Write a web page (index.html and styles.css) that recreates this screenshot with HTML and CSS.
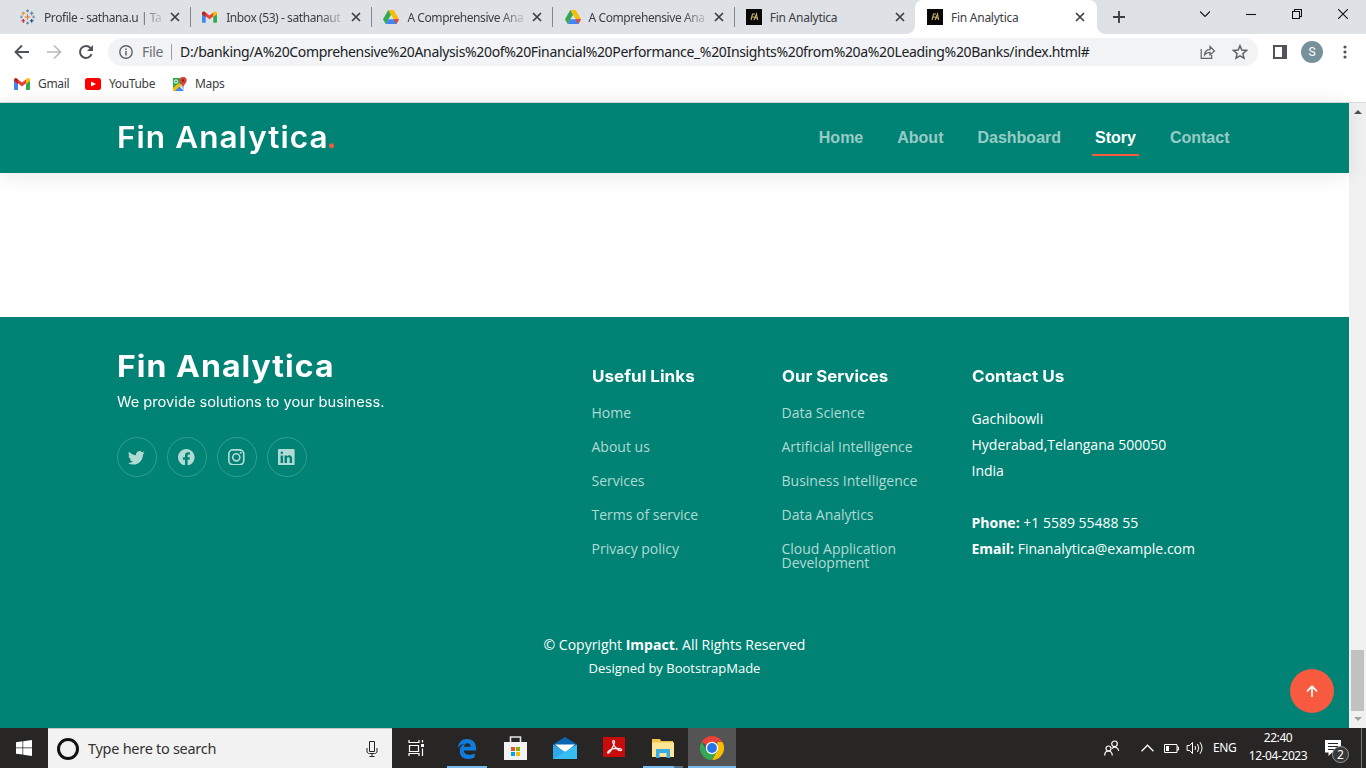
FILE: index.html
```html
<!DOCTYPE html>
<html lang="en">
<head>
<meta charset="utf-8">
<title>Fin Analytica</title>
<link rel="stylesheet" href="styles.css">
</head>
<body>
<svg class="defs" width="0" height="0">
  <symbol id="gmail" viewBox="0 0 16 12"><path fill="#4285f4" d="M0 2v9q0 1 1 1h3V5z"/><path fill="#34a853" d="M16 2v9q0 1-1 1h-3V5z"/><path fill="#ea4335" d="M3.500 5V1L8 4.400 12.500 1v4L8 8.500z"/><path fill="#c5221f" d="M0 3V2C0 .2 2-.6 3.600.9L4 1.200V6z"/><path fill="#fbbc04" d="M16 3V2c0-1.800-2-2.600-3.600-1.100L12 1.200V6z"/></symbol>
  <symbol id="drive" viewBox="0 0 16 14"><path fill="#fbbc04" d="M5.300 0h5.400L16 9.300h-5.300z"/><path fill="#4285f4" d="M5.300 9.300H16L13.300 14H2.700z"/><path fill="#34a853" d="M0 9.300 5.300 0 8 4.700 2.700 14z"/><path fill="#ea4335" d="M10.700 9.300H16L13.300 14z"/></symbol>
  <symbol id="x" viewBox="0 0 10 10"><path d="M1 1l8 8M9 1L1 9" stroke="#3c4043" stroke-width="1.700"/></symbol>
  <symbol id="fa" viewBox="0 0 16 16"><path fill="#080808" d="M0 0h16v16H0z"/><path d="M5 11l1.500-6H9M5.500 8h3M8 11l2.500-6 1 6M9 9h3" fill="none" stroke="#c9b16b" stroke-width="1.100"/></symbol>
</svg>

<header class="browser">
  <div class="tabs">
    <div class="tab first"><svg class="fav" viewBox="0 0 16 16"><g stroke-width="1.200"><path stroke="#e8762d" d="M8 5v6M5 8h6"/><path stroke="#5b879b" d="M8 0v3M6.500 1.500h3M8 13v3M6.500 14.500h3"/><path stroke="#eb912c" d="M3.500 2v4M1.500 4h4"/><path stroke="#59879b" d="M12.500 2v4M10.500 4h4"/><path stroke="#c72035" d="M3.500 10v4M1.500 12h4"/><path stroke="#1f457e" d="M12.500 10v4M10.500 12h4"/><path stroke="#7199a6" d="M1.500 6.500v3M0 8h3M14.500 6.500v3M13 8h3"/></g></svg><span class="title long">Profile - sathana.u | Tal</span><svg class="close"><use href="#x"/></svg></div>
    <div class="tab"><svg class="fav gm"><use href="#gmail"/></svg><span class="title long">Inbox (53) - sathanaut</span><svg class="close"><use href="#x"/></svg></div>
    <div class="tab"><svg class="fav"><use href="#drive"/></svg><span class="title long">A Comprehensive Ana</span><svg class="close"><use href="#x"/></svg></div>
    <div class="tab"><svg class="fav"><use href="#drive"/></svg><span class="title long">A Comprehensive Ana</span><svg class="close"><use href="#x"/></svg></div>
    <div class="tab last"><svg class="fav"><use href="#fa"/></svg><span class="title">Fin Analytica</span><svg class="close"><use href="#x"/></svg></div>
    <div class="tab active"><svg class="fav"><use href="#fa"/></svg><span class="title">Fin Analytica</span><svg class="close"><use href="#x"/></svg></div>
    <svg class="plus" viewBox="0 0 12 12"><path d="M6 0v12M0 6h12" stroke="#3c4043" stroke-width="1.900"/></svg>
    <div class="window-controls">
      <svg width="10" height="6"><path d="M0 .5l5 5 5-5"/></svg>
      <svg width="10" height="6"><path d="M0 3.500h10"/></svg>
      <svg width="10" height="10"><path d="M.5 2.500h7v7h-7zM2.500 2.500v-2h7v7h-2"/></svg>
      <svg width="10" height="10"><path d="M0 0l10 10M10 0L0 10"/></svg>
    </div>
  </div>
  <div class="toolbar">
    <svg class="nav" viewBox="0 0 16 16"><path d="M15 8H2M8 1.500L1.500 8 8 14.500" fill="none" stroke="#50545a" stroke-width="1.900"/></svg>
    <svg class="nav" viewBox="0 0 16 16"><path d="M1 8h13M8 1.500L14.500 8 8 14.500" fill="none" stroke="#b8babd" stroke-width="1.700"/></svg>
    <svg class="nav" viewBox="0 0 16 16"><path d="M13.600 10.200A6 6 0 1 1 12.500 4" fill="none" stroke="#50545a" stroke-width="2"/><path fill="#50545a" d="M15 1v6H9z"/></svg>
    <div class="address">
      <svg class="info" viewBox="0 0 14 14"><circle cx="7" cy="7" r="6.200" fill="none" stroke="#5f6368" stroke-width="1.400"/><path d="M7 6v4.500M7 3.500V5" stroke="#5f6368" stroke-width="1.500"/></svg>
      <span class="scheme">File</span><span class="rule"></span>
      <span class="url">D:/banking/A%20Comprehensive%20Analysis%20of%20Financial%20Performance_%20Insights%20from%20a%20Leading%20Banks/index.html#</span>
      <svg class="share" viewBox="0 0 16 14"><path d="M1.200 4v9.300h10.500V10M4.500 10c.3-3.500 2.300-5.300 5.500-5.300V1.500L14.500 6 10 10V7.300C7.500 7.300 6 8 4.500 10z" fill="none" stroke="#5f6368" stroke-width="1.200"/></svg>
      <svg class="star" viewBox="0 0 16 16"><path d="M8 1.700l1.800 4.400 4.700.4-3.600 3.100 1.100 4.600L8 11.800l-4 2.400 1.100-4.600-3.600-3.100 4.700-.4z" fill="none" stroke="#5f6368" stroke-width="1.500"/></svg>
    </div>
    <svg class="panel" viewBox="0 0 14 14"><path d="M1 1h12v12H1z" fill="none" stroke="#50545a" stroke-width="2"/><path d="M9 1h4v12H9z" fill="#50545a"/></svg>
    <span class="avatar">S</span>
    <svg class="kebab" viewBox="0 0 4 14"><g fill="#50545a"><circle cx="2" cy="2" r="1.600"/><circle cx="2" cy="7" r="1.600"/><circle cx="2" cy="12" r="1.600"/></g></svg>
  </div>
  <div class="bookmarks">
    <svg class="bm-gmail"><use href="#gmail"/></svg><span class="b1">Gmail</span>
    <svg class="bm-yt" viewBox="0 0 16 12"><rect width="16" height="12" rx="2.500" fill="#f00"/><path fill="#fff" d="M6 3.500L11 6 6 8.500z"/></svg><span class="b2">YouTube</span>
    <svg class="bm-map" viewBox="0 0 15 15"><path fill="#34a853" d="M1 1h9v6L1 14z"/><path fill="#4285f4" d="M7 9l5 5H2z"/><path fill="#c3c7c9" d="M12 5v8L8 9z"/><path fill="#fbbc04" d="M1 14V11l6-5 2 2-6 6z"/><circle cx="4" cy="4.500" r="1.600" fill="none" stroke="#fff"/><path fill="#db4437" d="M7.500 3.500a3.600 3.600 0 0 1 7.200 0C14.700 6 11.500 8 11.100 10 10.700 8 7.500 6 7.500 3.500z"/><circle cx="11.100" cy="3.500" r="1.200" fill="#8c1f17"/></svg><span class="b3">Maps</span>
  </div>
</header>

<div class="viewport">
  <main class="page">
    <div class="site-header">
      <div class="logo">Fin Analytica<i>.</i></div>
      <nav><a>Home</a><a>About</a><a>Dashboard</a><a class="current">Story</a><a>Contact</a></nav>
    </div>
    <footer class="footer">
      <div class="columns">
        <section class="brand">
          <h2>Fin Analytica</h2>
          <p>We provide solutions to your business.</p>
          <div class="social">
            <a><svg viewBox="0 0 16 16"><path d="M5.026 15c6.038 0 9.341-5.003 9.341-9.334 0-.14 0-.282-.006-.422A6.685 6.685 0 0 0 16 3.542a6.658 6.658 0 0 1-1.889.518 3.301 3.301 0 0 0 1.447-1.817 6.533 6.533 0 0 1-2.087.793A3.286 3.286 0 0 0 7.875 6.030a9.325 9.325 0 0 1-6.767-3.429 3.289 3.289 0 0 0 1.018 4.382A3.323 3.323 0 0 1 .640 6.575v.045a3.288 3.288 0 0 0 2.632 3.218 3.203 3.203 0 0 1-.865.115 3.230 3.230 0 0 1-.614-.057 3.283 3.283 0 0 0 3.067 2.277A6.588 6.588 0 0 1 .780 13.580a6.320 6.320 0 0 1-.780-.045A9.344 9.344 0 0 0 5.026 15z"/></svg></a>
            <a><svg viewBox="0 0 16 16"><path d="M16 8.049c0-4.446-3.582-8.050-8-8.050C3.580 0-.002 3.603-.002 8.050c0 4.017 2.926 7.347 6.750 7.951v-5.625h-2.030V8.050H6.750V6.275c0-2.017 1.195-3.131 3.022-3.131.876 0 1.791.157 1.791.157v1.980h-1.009c-.993 0-1.303.621-1.303 1.258v1.510h2.218l-.354 2.326H9.250V16c3.824-.604 6.750-3.934 6.750-7.951z"/></svg></a>
            <a><svg viewBox="0 0 16 16"><g fill="none" stroke="#b2dad5" stroke-width="1.600"><rect x=".8" y=".8" width="14.400" height="14.400" rx="4"/><circle cx="8" cy="8" r="3.400"/></g><circle cx="12.300" cy="3.700" r="1"/></svg></a>
            <a><svg viewBox="0 0 16 16"><path fill-rule="evenodd" d="M0 1.100C0 .5.500 0 1.200 0h13.600C15.500 0 16 .5 16 1.100v13.800c0 .6-.5 1.100-1.200 1.100H1.200C.5 16 0 15.500 0 14.900zM2.500 6.200h2.400v7.200H2.500zM3.700 2.400a1.250 1.250 0 1 0 0 2.500 1.250 1.250 0 1 0 0-2.500zM6.300 6.200h2.400v1C9.700 5.500 13.600 5.400 13.600 9v4.400h-2.400V9.500c0-2-2.500-2-2.500 0v3.900H6.300z"/></svg></a>
          </div>
        </section>
        <section><h4>Useful Links</h4><ul><li>Home</li><li>About us</li><li>Services</li><li>Terms of service</li><li>Privacy policy</li></ul></section>
        <section><h4 class="services">Our Services</h4><ul><li>Data Science</li><li>Artificial Intelligence</li><li>Business Intelligence</li><li>Data Analytics</li><li>Cloud Application Development</li></ul></section>
        <section><h4>Contact Us</h4><p class="contact">Gachibowli<br>Hyderabad,Telangana 500050<br>India<br><br><b>Phone:</b> +1 5589 55488 55<br><b>Email:</b> Finanalytica@example.com</p></section>
      </div>
      <div class="legal"><p>© Copyright <b>Impact</b>. All Rights Reserved</p><p class="credit">Designed by BootstrapMade</p></div>
    </footer>
    <a class="to-top"><svg viewBox="0 0 12 12"><path d="M6 12V1.500M1 6.300L6 1.300l5 5" fill="none" stroke="#fff" stroke-width="1.700"/></svg></a>
  </main>
  <div class="scrollbar"><svg viewBox="0 0 8 4"><path fill="#505050" d="M0 4l4-4 4 4z"/></svg><span class="thumb"></span><svg viewBox="0 0 8 4"><path fill="#a3a3a3" d="M0 0h8L4 4z"/></svg></div>
</div>

<div class="taskbar">
  <div class="start"><svg viewBox="0 0 16 16"><path fill="#fff" d="M0 2.200l6.500-.9v6.300H0zM7.200 1.200L16 0v7.600H7.200zM0 8.300h6.500v6.300L0 13.800zM7.200 8.300H16V16l-8.800-1.200z"/></svg></div>
  <div class="search"><span class="cortana"></span><span class="hint">Type here to search</span><svg class="mic" viewBox="0 0 12 16"><path d="M3.500.5h5v10h-5zM1 7v3c0 2 1 2.500 2.500 2.500h5C10 12.500 11 12 11 10V7M6 12.500v3M3.500 15.500h5" fill="none" stroke="#222"/></svg></div>
  <div class="app tasks"><svg width="18" height="16" viewBox="0 0 18 16"><path d="M1 0v2.500h10V0M1.500 5.500h9v6h-9zM1 16v-2.500h10V16M14.500 0v16" fill="none" stroke="#fff" stroke-width="1.200"/><path fill="#282625" d="M13 2.500h3v6h-3z"/><path fill="#fff" d="M13 4h3v3h-3z"/></svg></div>
  <div class="app run"><svg width="20" height="21" viewBox="0 0 22 22" preserveAspectRatio="none"><path fill="#0f7bdc" d="M1 10.500C1.500 4.500 5.500 1 11 1c6.500 0 10 4.500 10 9.500V13H7.500c.3 3 2.500 4.600 6 4.600 2.200 0 4.300-.6 6-1.600v4.200C17.700 21.200 15.400 22 12.500 22 6.700 22 3 18.600 3 13.500c0-3.400 2-6.300 5.200-7.500C5 6.200 2.500 8 1 10.500zM7.700 9.200h7.400C15 6.800 13.600 5.500 11.500 5.500S8 7 7.700 9.200z"/></svg></div>
  <div class="app"><svg width="23" height="24" viewBox="0 0 23 24"><path d="M6.500 8V1h10v7" fill="none" stroke="#e5e5e5" stroke-width="1.600"/><path fill="#f3f3f3" d="M0 6h23v18H0z"/><path fill="#f25022" d="M7 11h4v4H7z"/><path fill="#7fba00" d="M12 11h4v4h-4z"/><path fill="#00a4ef" d="M7 16h4v4H7z"/><path fill="#ffb900" d="M12 16h4v4h-4z"/></svg></div>
  <div class="app"><svg width="24" height="22" viewBox="0 0 24 22"><path fill="#0767b4" d="M0 7.500L12 0l12 7.500V15H0z"/><path fill="#fff" d="M2 7.500h20L12 16z"/><path fill="#2fa8e8" d="M0 7.500L24 22H0z"/><path fill="#38bdf2" d="M24 7.500V22H0l12-7.300z"/></svg></div>
  <div class="app"><svg class="pdf" width="22" height="20" viewBox="0 0 22 20"><path fill="#c80b0b" d="M0 0h22v20H0z"/><path d="M10.500 3.500c-2 0 0 5 3 8s5.500 2.500 5 1-7-1.500-10-.2-4.500 3-3.600 3.800c1.600 1.200 6.600-8.600 6.600-11.300 0-.8-.4-1.300-1-1.300z" fill="none" stroke="#fff" stroke-width="1.200"/></svg></div>
  <div class="app run split"><svg width="22" height="19" viewBox="0 0 22 19"><path fill="#f1c54f" d="M0 0h8l1 2h12v4H0z"/><path fill="#ffe697" d="M0 3.500h22V18H0z"/><path fill="#39ace3" d="M4 10h14v9h-3.500v-5h-7v5H4z"/></svg></div>
  <div class="app run selected"><svg width="24" height="24" viewBox="0 0 24 24"><path fill="#ea4335" d="M1.600 6A12 12 0 0 1 22.400 6H12v6z"/><path fill="#fbbc04" d="M22.400 6A12 12 0 0 1 12 24l5.200-9L17.200 6z"/><path fill="#34a853" d="M1.600 6A12 12 0 0 0 12 24l5.200-9-5.200 3-5.200-3z"/><circle cx="12" cy="12" r="6.200" fill="#fff"/><circle cx="12" cy="12" r="4.900" fill="#2873e6"/></svg></div>
  <div class="tray">
    <svg class="people" viewBox="0 0 16 16"><g fill="none" stroke="#fff" stroke-width="1.200"><circle cx="10.500" cy="3.800" r="2.800"/><circle cx="4.500" cy="8.500" r="2.500"/><path d="M.7 15.500c0-6 7.600-6 7.600 0M8 8.500c3-2.500 6.300-1 6.600 2.500"/></g></svg>
    <svg class="chev" viewBox="0 0 12 7"><path d="M.5 6.500L6 1l5.500 5.500" fill="none" stroke="#fff" stroke-width="1.200"/></svg>
    <svg class="bat" viewBox="0 0 15 9"><path d="M.5.5h12.500v8H.5zM13 3h1.500v3H13" fill="none" stroke="#fff"/><path fill="#fff" d="M2 2h3v5H2z"/></svg>
    <svg class="vol" viewBox="0 0 17 14"><path d="M.6 4.500h2.500L6 1.500v11l-2.900-3H.6zM8.500 5q1.200 2 0 4M11 3q2.500 4 0 8M13.500 1.200q4 5.800 0 11.600" fill="none" stroke="#fff"/></svg>
    <span class="lang">ENG</span>
    <div class="clock"><span>22:40</span><span>12-04-2023</span></div>
    <div class="notice"><svg viewBox="0 0 16 16"><path fill="#fff" d="M0 0h16v12.500H7L3.500 16v-3.500H0z"/><path d="M3 3.500h10M3 6.500h10M3 9.500h7" stroke="#252525"/></svg><span class="badge">2</span></div>
    <span class="peek"></span>
  </div>
</div>
</body>
</html>
```
FILE: styles.css
```css
* { box-sizing: border-box; }
body { margin: 0; width: 1366px; height: 768px; overflow: hidden; display: flex; flex-direction: column; font-family: "Open Sans", sans-serif; }
svg { display: block; flex: none; }
p, h2, h4, ul { margin: 0; padding: 0; }
.defs { position: absolute; }

/* Browser frame */
.browser { height: 103px; border-bottom: 1px solid #dadce0; color: #3c4043; font-family: "Noto Sans", sans-serif; white-space: nowrap; }
.tabs { height: 34px; background: #dee1e6; display: flex; padding-left: 10px; }
.tab { flex: none; width: 181.2px; height: 34px; display: flex; align-items: center; padding-left: 11px; font-size: 12px; background: linear-gradient(#85888d, #85888d) 180px 7px / 1px 20px no-repeat; }
.tab.first { padding-left: 10px; }
.tab.first .title { width: 119px; }
.tab.first .fav { width: 15px; margin-right: 1px; }
.tab.last { background: none; }
.tab.active { position: relative; background: #fff; border-radius: 8px 8px 0 0; width: 182px; margin-left: -1px; padding-left: 12px; }
.tab.active::before, .tab.active::after { content: ""; position: absolute; bottom: 0; width: 8px; height: 8px; }
.tab.active::before { left: -8px; background: radial-gradient(circle at 0 0, transparent 7.5px, #fff 8px); }
.tab.active::after { right: -8px; background: radial-gradient(circle at 100% 0, transparent 7.5px, #fff 8px); }
.tab.active .title { width: 117px; }
.fav { width: 16px; height: 16px; }
.fav.gm { height: 12px; width: 15px; margin-right: 1px; }
.title { flex: none; width: 118px; margin-left: 7px; padding-left: 1px; letter-spacing: -.25px; }
.title.long { letter-spacing: -.42px; -webkit-mask-image: linear-gradient(90deg, #000 80%, rgba(0, 0, 0, .15)); mask-image: linear-gradient(90deg, #000 80%, rgba(0, 0, 0, .15)); }
.close { width: 10px; height: 10px; margin-left: 8px; }
.plus { width: 12px; height: 12px; margin: 11px 0 0 16px; }
.window-controls { display: flex; align-items: center; gap: 36px; height: 28px; margin-left: auto; padding-right: 18px; }
.window-controls path { fill: none; stroke: #111; stroke-width: 1.1; }
.toolbar { height: 36px; display: flex; align-items: center; padding-left: 14px; }
.nav { width: 16px; height: 16px; margin-right: 16px; }
.address { width: 1150px; height: 28px; border-radius: 14px; margin-left: -2px; padding: 0 11px; background: #f1f3f4; display: flex; align-items: center; }
.info { width: 14px; height: 14px; }
.scheme { width: 28px; margin-left: 9px; padding-bottom: 1px; font-size: 14px; color: #6b6f74; letter-spacing: -.3px; }
.rule { width: 1px; height: 16px; background: #9a9da1; margin-left: 1px; }
.url { margin-left: 8px; width: 960px; padding-bottom: 2px; font-size: 14px; color: #202124; letter-spacing: -.34px; }
.share { width: 16px; height: 14px; margin-left: auto; }
.star { width: 16px; height: 16px; margin-left: 16px; margin-right: -1px; }
.panel { width: 14px; height: 14px; margin-left: 15px; }
.avatar { width: 22px; height: 22px; border-radius: 50%; margin-left: 14px; background: #78909c; color: #fff; text-align: center; font: 12px/22px Roboto, sans-serif; }
.kebab { width: 4px; height: 14px; margin-left: 19.500px; }
.bookmarks { height: 28px; display: flex; align-items: center; padding-left: 14px; font-size: 12px; letter-spacing: -.35px; }
.bookmarks span { padding-bottom: 1px; }
.bm-gmail { width: 16px; height: 12px; margin-right: 8px; }
.bm-yt { width: 16px; height: 12px; margin-right: 8px; }
.bm-map { width: 15px; height: 15px; margin-right: 8px; }
.b1 { width: 47px; }
.b2 { width: 63px; }

/* Site */
.viewport { height: 625px; display: flex; }
.page { position: relative; width: 1349px; display: flex; flex-direction: column; justify-content: space-between; background: #fff; color: #fff; }
.site-header { height: 70px; padding: 0 119px 0 117px; background: #008374; display: flex; align-items: center; justify-content: space-between; box-shadow: 0 2px 20px rgba(0, 0, 0, .1); }
.logo { font: 600 30px/36px Inter, sans-serif; letter-spacing: 1px; padding-bottom: 2px; transform: scaleX(1.05); transform-origin: 0 0; }
.logo i { color: #f85a40; font-style: normal; margin-left: -2px; }
nav { display: flex; gap: 34px; padding-right: .5px; }
nav a { font: bold 16px/38px "Liberation Sans", Arial, sans-serif; color: rgba(255, 255, 255, .6); }
nav .current { color: #fff; padding: 0 3px; margin: 0 -3px; border-bottom: 2px solid #f85a40; height: 37px; }
.footer { height: 411px; background: #008374; font-size: 14px; }
.columns { height: 311px; padding: 0 116px 0 117px; display: grid; grid-template-columns: 474.5px 190px 190px 1fr; }
.brand { padding-top: 31px; }
.brand h2 { font: 700 30px/36px Inter, sans-serif; letter-spacing: 1px; width: max-content; transform: scaleX(1.064); transform-origin: 0 0; }
.brand p { font: 14px/20px Inter, sans-serif; padding-top: 8px; width: max-content; transform: scaleX(1.047); transform-origin: 0 0; }
.social { display: flex; gap: 10px; margin-top: 25px; }
.social a { width: 40px; height: 40px; border: 1px solid rgba(255, 255, 255, .2); border-radius: 50%; display: flex; align-items: center; justify-content: center; }
.social svg { width: 16.600px; height: 16.600px; margin-right: 1px; fill: #b2dad5; }
.columns h4 { font: 700 16px/20px Inter, sans-serif; padding-top: 49px; height: 79px; width: max-content; transform: scaleX(1.067); transform-origin: 0 0; }
.columns .services { transform: scaleX(1.05); }
.columns ul { list-style: none; width: 166px; }
.columns li { line-height: 14px; padding: 10px 0; color: #b2dad5; }
.contact { line-height: 26px; padding-top: 10px; white-space: nowrap; }
.legal { text-align: center; line-height: 24px; padding-top: 5px; }
.credit { font-size: 13px; line-height: 22px; }
.to-top { position: absolute; right: 15px; bottom: 15px; width: 44px; height: 44px; border-radius: 50%; background: #f85a40; display: flex; align-items: center; justify-content: center; }
.to-top svg { width: 12px; height: 12px; }
.scrollbar { width: 17px; background: #f1f1f1; display: flex; flex-direction: column; align-items: center; padding: 7px 0 7px; }
.scrollbar svg { width: 8px; height: 4px; }
.thumb { width: 13px; height: 61px; background: #c1c1c1; margin: auto 0 6px; }

/* Taskbar */
.taskbar { height: 40px; background: #282625; color: #fff; display: flex; white-space: nowrap; font-family: "Noto Sans", sans-serif; }
.start { width: 48px; padding: 12px 16px; }
.start svg { width: 16px; height: 16px; }
.search { width: 344px; background: #f2f2f2; color: #333; border-top: 1px solid #c6c6c6; display: flex; align-items: center; padding: 0 14px 0 9px; }
.cortana { width: 22px; height: 22px; border: 3px solid #111; border-radius: 50%; }
.hint { font-size: 14.5px; margin-left: 9px; padding-bottom: 2px; letter-spacing: -.28px; }
.mic { width: 12px; height: 16px; margin-left: auto; }
.app { width: 49.200px; height: 40px; display: flex; align-items: center; justify-content: center; }
.app.tasks { width: 50px; padding-right: 1px; }
.app.run { background: linear-gradient(#76b9ed, #76b9ed) 50% 100% / 40px 2px no-repeat; }
.app.selected { width: 48px; background: linear-gradient(#76b9ed, #76b9ed) 0 100% / 100% 2px no-repeat #545454; }
.app.split { background-image: linear-gradient(90deg, #76b9ed 31px, #52718a 31px); }
.pdf { margin-bottom: 3px; }
.tray { margin-left: auto; display: flex; align-items: center; }
.people { width: 16px; height: 16px; margin-right: 21px; }
.chev { width: 13px; height: 8px; margin-right: 10px; }
.bat { width: 15px; height: 9px; margin-right: 7px; }
.vol { width: 18px; height: 14px; margin-right: 9px; }
.lang { width: 36px; font-size: 12px; letter-spacing: -.4px; padding-bottom: 1px; }
.clock { width: 58px; display: flex; flex-direction: column; align-items: center; font-size: 12px; line-height: 18px; letter-spacing: -.42px; margin-top: -2px; }
.notice { position: relative; width: 41px; height: 16px; margin-left: 18px; }
.notice svg { width: 16px; height: 16px; }
.badge { position: absolute; left: 7px; top: 6px; width: 17px; height: 17px; border-radius: 50%; border: 1px solid #999; background: #383838; font-size: 12px; line-height: 15px; text-align: center; }
.peek { width: 1px; height: 40px; background: #777; margin-right: 4px; margin-left: -5px; }
```
